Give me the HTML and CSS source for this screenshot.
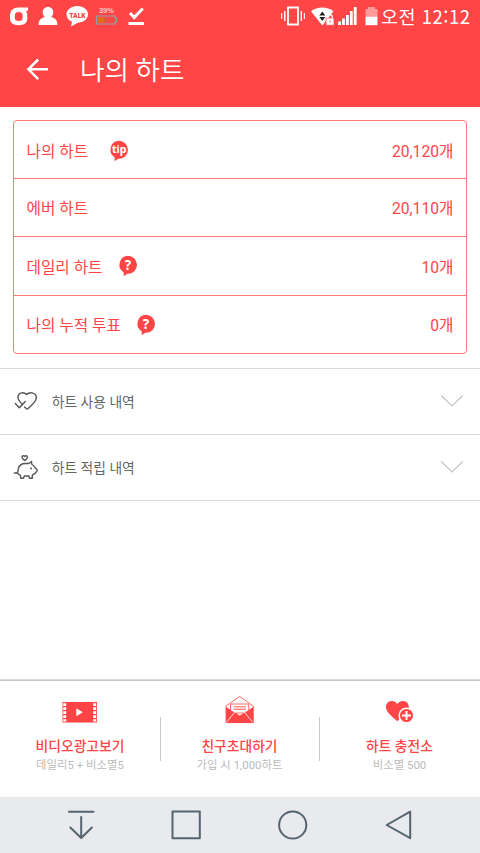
FILE: index.html
```html
<!DOCTYPE html>
<html lang="ko">
<head>
<meta charset="utf-8">
<meta name="viewport" content="width=device-width, initial-scale=1">
<title>나의 하트</title>
<link rel="stylesheet" href="styles.css">
</head>
<body>
<div class="screen">
  <header class="top">
    <div class="status">
      <svg class="status-left" width="150" height="32" viewBox="0 0 150 32">
        <path d="M28 7.500v3.200h-2.200c1 1.500 1.500 2.800 1.500 5.300v2c0 5-3 7.200-8.600 7.200S10 23 10 18v-2.400c0-5 3-8.100 8.700-8.100zM18.700 12c-2.700 0-3.900 1.200-3.900 3.500v2.300c0 2.200 1.200 3.300 3.900 3.300s3.900-1.100 3.900-3.300v-2.300c0-2.300-1.200-3.500-3.900-3.500z" fill="#fff" fill-rule="evenodd"/>
        <path d="M48 7c3.300 0 5.300 2.300 5.300 5.300 0 2-.9 3.800-2.200 4.800 4 .9 6.300 3.300 6.300 7.900H38.600c0-4.600 2.300-7 6.300-7.900-1.300-1-2.200-2.800-2.200-4.800C42.700 9.300 44.700 7 48 7z" fill="#fff"/>
        <path d="M77.300 6C83.500 6 88 9.700 88 14.300s-4.500 8.300-10.200 8.400L71 26.500l1-4.700c-3.500-1.400-5.500-4.200-5.500-7.500C66.500 9.700 71.200 6 77.300 6z" fill="#fff"/>
        <text class="talk" x="77.400" y="17.500" textLength="16.500" lengthAdjust="spacingAndGlyphs">TALK</text>
        <text class="charge" x="106.400" y="13.300">39%</text>
        <path d="M96.500 16h18.500v2h1.500v4H115v2H96.500z" fill="none" stroke="#97a0aa" stroke-width="1.200"/>
        <path d="M98 17.500h6.500v5H98z" fill="#df7414"/><path d="m105.500 17-2 3.200h2l-1 2.800 3.500-4h-2z" fill="#b86b35"/>
        <path d="m130 13 4.200 4.500 8.600-9" fill="none" stroke="#fff" stroke-width="3"/>
        <path d="M128.500 22H144v3h-15.500z" fill="#fff"/>
      </svg>
      <svg class="status-right" width="102" height="32" viewBox="279 0 102 32">
        <g fill="none" stroke="#fff"><path d="M288 7.500h10v17h-10z" stroke-width="1.800"/><path d="M284.800 11v10M301.300 11v10" stroke-width="1.400"/><path d="M281.700 13v6M304.400 13v6" stroke-width="1.200"/></g>
        <path d="M311 11.200c6.500-5 16-5 22.500 0L322.300 25.500z" fill="#fff"/>
        <path d="m322.300 11.500 3 4h-6zM319.300 17h6l-3 4z" fill="#222"/>
        <path d="M326 18h8v7.200h-8z" fill="#fff" stroke="#ff4545" stroke-width=".7"/><path d="M327.800 18v-1.200c0-2.900 4.400-2.900 4.400 0V18" fill="none" stroke="#fff" stroke-width="1.300"/><path d="M329.500 20.500h1v2h-1z" fill="#ff4545"/>
        <path d="M338.200 21.500h2.800V25h-2.800zM342.100 18.500h2.800V25h-2.800zM346 15h2.800v10H346zM349.900 11h2.800v14h-2.800zM353.800 7h2.800v18h-2.800z" fill="#fff"/>
        <path d="M368 7h7v2h2.500v8h-12V9h2.500z" fill="#ff9a9a"/><path d="M365.500 16.800h12v8.400h-12z" fill="#fff"/>
      </svg>
      <span class="clock">오전 12:12</span>
    </div>
    <div class="appbar">
      <svg class="back" width="24" height="24" viewBox="26 57 24 24"><path d="M48 69.300H28.500M38.200 59.500 28.400 69.300l9.800 9.800" fill="none" stroke="#fff" stroke-width="2.500"/></svg>
      <h1>나의 하트</h1>
    </div>
  </header>

  <main>
    <dl class="card">
      <div class="row"><dt>나의 하트</dt>
        <svg class="bubble tip" width="20" height="22" viewBox="0 0 20 22"><path d="M10 .8a9 9 0 0 1 0 18H9.300L5.700 21.200v-3.800A9 9 0 0 1 10 .8z" fill="#ff4545"/><text class="tip-text" x="10.200" y="13.300" textLength="14.500" lengthAdjust="spacingAndGlyphs">tip</text></svg>
        <dd>20,120개</dd></div>
      <div class="row"><dt>에버 하트</dt><dd>20,110개</dd></div>
      <div class="row"><dt>데일리 하트</dt>
        <svg class="bubble" width="20" height="22" viewBox="0 0 20 22"><path d="M10 .8a9 9 0 0 1 0 18H9.300L5.700 21.200v-3.800A9 9 0 0 1 10 .8z" fill="#ff4545"/><text class="q-text" x="10" y="14.500">?</text></svg>
        <dd>10개</dd></div>
      <div class="row"><dt>나의 누적 투표</dt>
        <svg class="bubble" width="20" height="22" viewBox="0 0 20 22"><path d="M10 .8a9 9 0 0 1 0 18H9.300L5.700 21.200v-3.800A9 9 0 0 1 10 .8z" fill="#ff4545"/><text class="q-text" x="10" y="14.500">?</text></svg>
        <dd>0개</dd></div>
    </dl>
    <ul class="history">
      <li>
        <svg width="26" height="28" viewBox="13 387 26 28"><g fill="none" stroke="#555" stroke-width="1.400" stroke-linecap="round" stroke-linejoin="round"><path d="M22.500 404.500c-2.700-2.500-5.300-5.200-4.400-8.500 1-3.800 5.800-4.200 8.500-1.400 2.900-2.800 8.200-2.300 9.500 1.400 1.100 3.500-1.300 6-3.600 8.300l-4.300 4.200c-.8.700-1.300.7-2 0l-1.600-1.500"/><path d="m15.300 403.500 4 4.300 6-6.300"/></g></svg>
        <span>하트 사용 내역</span>
        <svg class="chevron" width="24" height="14" viewBox="0 0 24 14"><path d="m1.300 1.500 10.700 10.400L22.700 1.500" fill="none" stroke="#c4c4c4" stroke-width="1.200"/></svg>
      </li>
      <li>
        <svg width="26" height="28" viewBox="13 453 26 28"><g fill="none" stroke="#555" stroke-width="1.400" stroke-linecap="round" stroke-linejoin="round"><path d="M24.700 460.500c-1.700-1.500-3-2.300-2.700-3.700.3-1.400 2-1.400 2.700-.4.700-1 2.400-1 2.700.4.300 1.400-1 2.200-2.700 3.700z"/><path d="M14.300 473h2.500c1.500-.5 1.200-2.500 1.500-4.200.7-3.300 3.700-5.300 7.200-5.300h3.300l2.800-2v2.500c1.800 1 2.800 2.500 3.700 4l1.700 1.500v1.700l-2.300 2.500-2.400 1.500v3h-2.600l-.8-2.200h-4.600l-.8 2.200h-2.700l-.4-2.800c-1.400-.7-2.700-1.600-3.200-3"/></g><circle cx="31" cy="468.500" r="1" fill="#555"/></svg>
        <span>하트 적립 내역</span>
        <svg class="chevron" width="24" height="14" viewBox="0 0 24 14"><path d="m1.300 1.500 10.700 10.400L22.700 1.500" fill="none" stroke="#c4c4c4" stroke-width="1.200"/></svg>
      </li>
    </ul>
  </main>

  <footer class="actions">
    <section class="action">
      <svg width="38" height="32" viewBox="61 694 38 32"><path d="M62.500 702h34.500v20.500H62.500z" fill="#ff4545"/><path d="M63.200 703.300h3v2.800h-3zM63.200 707.300h3v2.800h-3zM63.200 711.300h3v2.800h-3zM63.200 715.300h3v2.800h-3zM63.200 719.300h3v2.300h-3zM93.200 703.300h3v2.800h-3zM93.200 707.300h3v2.800h-3zM93.200 711.300h3v2.800h-3zM93.200 715.300h3v2.800h-3zM93.200 719.300h3v2.300h-3zM76.300 708.300v8l6.500-4z" fill="#fff"/></svg>
      <h2>비디오광고보기</h2><p>데일리5 + 비소멸5</p>
    </section>
    <section class="action">
      <svg width="32" height="32" viewBox="224 694 32 32"><path d="m226 706 13.700-9.500L253.300 706v16.600H226z" fill="#fff" stroke="#ff4545" stroke-width=".8" stroke-linejoin="round"/><path d="m226 707 13.700 8.500L253.300 707v16H226z" fill="#ff4545"/><path d="M230.500 704h18.300v6.500l-4.500 2.500h-9.200l-4.600-2.500z" fill="#fff" stroke="#ff4545" stroke-width=".8"/><path d="M233.500 706.800h12.500M233.500 709.200h12.500" stroke="#ff4545" stroke-width=".9"/><path d="m226.500 722.300 8.500-10.300M252.800 722.300l-8.500-10.300" stroke="#fff" stroke-width=".8"/></svg>
      <h2>친구초대하기</h2><p>가입 시 1,000하트</p>
    </section>
    <section class="action">
      <svg width="30" height="32" viewBox="385 694 30 32"><path d="M397.300 721.300c-4-4-11.300-8.500-11.300-14.300 0-6.500 8-8 11.300-3 3.400-5 11.500-3.500 11.500 3 0 5.800-7.500 10.300-11.500 14.300z" fill="#ff4545"/><circle cx="406.500" cy="715.500" r="7.300" fill="#ff4545" stroke="#fff" stroke-width="1.500"/><path d="M406.500 711v9M402 715.500h9" stroke="#fff" stroke-width="2"/></svg>
      <h2>하트 충전소</h2><p>비소멸 500</p>
    </section>
  </footer>

  <nav class="navbar">
    <svg width="30" height="32" viewBox="66 809 30 32"><path d="M69 811.700h24.500M81.200 817v21M70.300 827.500l10.900 10.500 10.700-10.500" class="stroke"/></svg>
    <svg width="32" height="32" viewBox="171 809 32 32"><path d="M173.500 811.500h27.300v26.700h-27.300z" class="stroke"/></svg>
    <svg width="32" height="32" viewBox="277 809 32 32"><circle cx="292.700" cy="825" r="13.600" class="stroke"/></svg>
    <svg width="30" height="32" viewBox="383 809 30 32"><path d="M410.200 811.700v26.500L386.700 825z" class="stroke"/></svg>
  </nav>
</div>
</body>
</html>
```

FILE: styles.css
```css
* { box-sizing: border-box; }
body, h1, h2, p, dl, dd, ul { margin: 0; padding: 0; }
body {
  background: #fff;
  font-family: Roboto, "Noto Sans CJK KR", sans-serif;
}
svg { display: block; flex: none; }
.screen {
  width: 480px;
  height: 853px;
  display: flex;
  flex-direction: column;
  overflow: hidden;
}
.top { height: 106.5px; background: #ff4545; color: #fff; flex: none; }
.status { height: 32px; display: flex; align-items: center; }
.status-right { margin-left: auto; }
.clock {
  width: 99px;
  font: 400 18.500px/32px "Noto Sans CJK KR", sans-serif;
  letter-spacing: 0.500px;
  white-space: nowrap;
}
.talk, .charge, .tip-text, .q-text { text-anchor: middle; }
.talk { font: 900 8px Roboto, sans-serif; fill: #ff4545; }
.charge { font: 700 7.500px "Liberation Sans", sans-serif; fill: #ffc9c9; }
.tip-text { font: 700 11px "Noto Sans", sans-serif; fill: #fff; }
.q-text { font: 700 13.500px "Noto Sans", sans-serif; fill: #fff; }
.appbar { height: 74px; display: flex; align-items: center; padding-left: 26px; }
h1 { margin-left: 30px; padding-top: 3px; font-size: 26.670px; font-weight: 350; line-height: 40px; }

main { flex: 1; }
.card {
  margin: 13.500px 13px 0;
  height: 234px;
  border: 1px solid #ff7777;
  border-radius: 4px;
  display: grid;
  grid-template-rows: 57px 58px 59px 1fr;
  color: #ff4545;
  font-size: 15.700px;
}
.row { display: flex; align-items: center; padding: 2px 12.500px 0 12.500px; }
.row + .row { border-top: 1px solid #ff7777; padding-top: 0; }
.row:nth-child(2) { padding-bottom: 1px; }
.bubble { margin-left: 15.500px; }
.tip { margin-left: 20.500px; }
dd { margin-left: auto; }
.history {
  margin-top: 14px;
  list-style: none;
  border-top: 1px solid #dadada;
  color: #666;
  font-size: 13.800px;
}
.history li {
  height: 66px;
  padding: 0 16.500px 0 13px;
  border-bottom: 1px solid #dadada;
  display: flex;
  align-items: center;
}
.history span { margin-left: 12.800px; padding-bottom: 2px; }
.history svg { margin-bottom: 1px; }
.history .chevron { margin-left: auto; }

.actions {
  height: 117px;
  flex: none;
  border-top: 1px solid #c8c8c8;
  box-shadow: 0 -1px #dcdcdc;
  display: grid;
  grid-template-columns: 160px 159px 161px;
}
.action {
  position: relative;
  display: flex;
  flex-direction: column;
  align-items: center;
  padding-top: 13px;
}
.action + .action::before {
  content: "";
  position: absolute;
  left: 0;
  top: 36px;
  width: 1px;
  height: 44px;
  background: #c8c8c8;
}
h2 { margin-top: 10px; font-size: 13.800px; line-height: 20px; font-weight: 500; color: #ff4545; }
.action p { padding-top: 2px; font-size: 11.400px; line-height: 14px; color: #bbb; }

.navbar {
  height: 56px;
  flex: none;
  background: #e8eaed;
  display: flex;
  justify-content: space-between;
  align-items: center;
  padding: 0 67px 0 66px;
}
.stroke { fill: none; stroke: #56646e; stroke-width: 2; stroke-linecap: round; stroke-linejoin: round; }
```
